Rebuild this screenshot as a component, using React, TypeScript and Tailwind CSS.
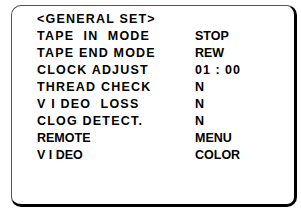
const ROWS: { label: string; value?: string; wide?: boolean }[] = [
  { label: "<GENERAL SET>", wide: true },
  { label: "TAPE  IN  MODE", value: "STOP", wide: true },
  { label: "TAPE END MODE", value: "REW", wide: true },
  { label: "CLOCK ADJUST", value: "01 : 00", wide: true },
  { label: "THREAD CHECK", value: "N", wide: true },
  { label: "V I DEO  LOSS", value: "N", wide: true },
  { label: "CLOG DETECT.", value: "N", wide: true },
  { label: "REMOTE", value: "MENU" },
  { label: "V I DEO", value: "COLOR" },
];

export default function App() {
  return (
    <div className="w-[301px] h-[209px] bg-white pt-[5px] pl-[11px]">
      {/* menu box, heavy edge on right + bottom */}
      <div className="w-[286px] h-[202px] border-l border-t border-r-[3px] border-b-[3px] border-l-[#555] border-t-[#555] border-r-black border-b-black rounded-[10px] pl-[25px] pt-[5px] font-['Liberation_Sans',Arial,sans-serif] font-bold text-[12.5px] leading-[17px] text-black">
        {ROWS.map((r) => (
          <div key={r.label} className="flex whitespace-pre">
            <span className={`w-[158px] ${r.wide ? "tracking-[1.2px]" : ""}`}>{r.label}</span>
            {r.value && (
              <span className={r.value.includes(":") ? "tracking-[1px]" : ""}>{r.value}</span>
            )}
          </div>
        ))}
      </div>
    </div>
  );
}
